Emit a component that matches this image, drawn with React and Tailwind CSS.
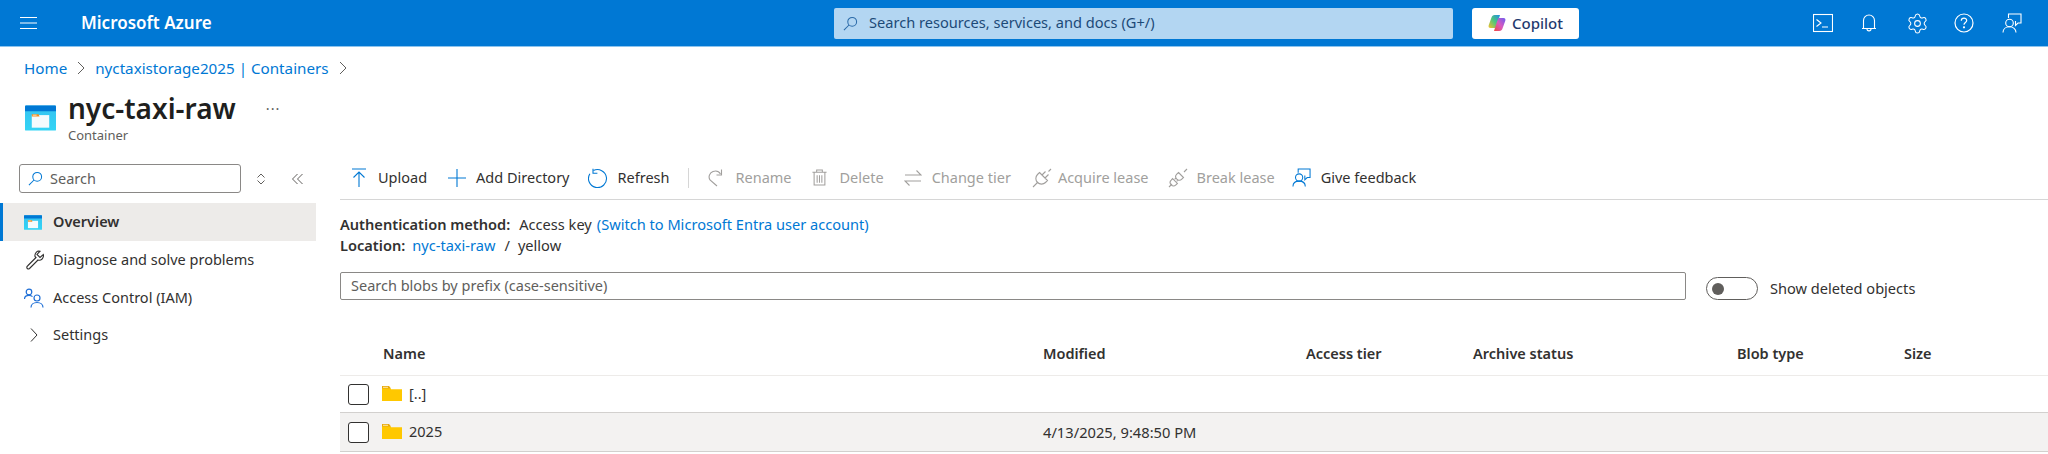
import React from 'react';
import { Settings as Gear } from 'lucide-react';

const Svg = ({ size = 20, className = '', children, vb = '0 0 20 20' }) => (
    <svg width={size} height={size} viewBox={vb} fill="none" stroke="currentColor" strokeWidth="1.1" className={`shrink-0 ${className}`}>
        {children}
    </svg>
);

const SearchIcon = ({ size = 16, className }) => (
    <Svg size={size} vb="0 0 16 16" className={className}>
        <circle cx="9.8" cy="6.2" r="4.7" />
        <path d="M6.4 9.6 1 15" />
    </Svg>
);

const ContainerIcon = ({ w, h }) => (
    <svg width={w} height={h} viewBox="0 0 32 26" className="shrink-0">
        <defs>
            <linearGradient id="cbody" x1="0" y1="0" x2="0" y2="1">
                <stop offset="0" stopColor="#37c2f0" />
                <stop offset="1" stopColor="#32d4f5" />
            </linearGradient>
        </defs>
        <rect x="0" y="0" width="32" height="26" rx="1" fill="url(#cbody)" />
        <path d="M1 0h30a1 1 0 0 1 1 1v5H0V1a1 1 0 0 1 1-1z" fill="#0078d4" />
        <rect x="7" y="10" width="18" height="13" fill="#f4fbfd" />
        <path d="M7 9h7l1 2.5H7z" fill="#f78d1e" />
        <rect x="8" y="9.6" width="4" height="1" fill="#fde0b8" />
    </svg>
);

const FolderIcon = () => (
    <svg width="20" height="16" viewBox="0 0 20 16" className="shrink-0">
        <path d="M0 1.2h7.5l1.6 2H20V15H0z" fill="#ffc800" />
        <path d="M0 0h7l2 2.4H0z" fill="#e8a90e" />
        <rect x="1" y="0.8" width="5" height="1" fill="#ffe9a8" />
    </svg>
);

const FeedbackIcon = ({ size = 20, className }) => (
    <Svg size={size} className={className}>
        <path d="M6.5 5V1h12.5v9h-3l-2.5 2.4V8" />
        <circle cx="7.5" cy="10" r="3.8" />
        <path d="M1 19.5c0-3.6 2.8-5.7 6.5-5.7s6.5 2.1 6.5 5.7" />
    </Svg>
);

const PlugIcon = ({ broken }) => (
    <Svg size={20} vb="0 0 20 20">
        {broken ? (
            <>
                <path d="M1 19l3-3M16 4l3-3" />
                <path d="M4.600 10.600l4.800 4.800-1.500 1.400a3.300 3.300 0 0 1-4.700-4.700z" />
                <path d="M10.500 4.500l5 5-1.700 1.700a3.500 3.500 0 0 1-5-5zM8.400 9.600l-1.800 1.800M10.400 11.600l-1.800 1.800" />
            </>
        ) : (
            <>
                <path d="M1 19l5-5M16.500 3.500L19 1" />
                <path d="M7.500 4.500l8 8-2 2a5.600 5.600 0 0 1-8-8zM10 7l3.500-3.500M13 10l3.500-3.500" />
            </>
        )}
    </Svg>
);

const toolbar = [
    {
        label: 'Upload', ml: 'ml-[12px]', gap: 'gap-[12px]', text: 'text-[#323130]', iconColor: 'text-[#0078d4]',
        icon: <Svg size={14} vb="0 0 14 20" className="h-5"><path d="M0 1h14M7 19V4M1.5 9.5 7 4l5.5 5.5" /></Svg>,
    },
    {
        label: 'Add Directory', ml: 'ml-[21px]', gap: 'gap-[10px]', text: 'text-[#323130]', iconColor: 'text-[#0078d4]',
        icon: <Svg size={18} vb="0 0 18 18"><path d="M9 0v18M0 9h18" /></Svg>,
    },
    {
        label: 'Refresh', ml: 'ml-[18px]', gap: 'gap-[10px]', text: 'text-[#323130]', iconColor: 'text-[#0078d4]',
        icon: <Svg size={20}><path d="M5.4 2.6a9 9 0 1 1-3.5 3.2" /><path d="M5 .8v4.4h4.4" /></Svg>,
    },
];

const disabledTools = [
    {
        label: 'Rename', ml: 'ml-[19px]', gap: 'gap-[10px]',
        icon: <Svg size={18} vb="0 0 18 18"><path d="M9 17 2 11c-2-3-.5-7 3-8.500 3-1 6 0 7.500 2.500" /><path d="M13.500.5V6H8.500" /></Svg>,
    },
    {
        label: 'Delete', ml: 'ml-[19px]', gap: 'gap-[12px]',
        icon: <Svg size={17} vb="0 0 17 18"><path d="M1 3.500h15M5.500 3.500V1h6v2.500M2.800 3.500V17h11.400V3.500M6 6.500v8M8.500 6.500v8M11 6.500v8" /></Svg>,
    },
    {
        label: 'Change tier', ml: 'ml-[20px]', gap: 'gap-[10px]',
        icon: <Svg size={18} vb="0 0 18 18"><path d="M1 6h16l-4.500-4.500M17 12H1l4.500 4.500" /></Svg>,
    },
    { label: 'Acquire lease', ml: 'ml-[21px]', gap: 'gap-[6px]', icon: <PlugIcon /> },
    { label: 'Break lease', ml: 'ml-[19px]', gap: 'gap-[9px]', icon: <PlugIcon broken /> },
];

const Tool = ({ item, color }) => (
    <div className={`flex items-center ${item.ml} ${item.gap} ${color}`}>
        <span className={item.iconColor}>{item.icon}</span>
        <span className="whitespace-nowrap">{item.label}</span>
    </div>
);

const NavRow = ({ icon, active, children }) => (
    <div className={`flex items-center h-[38px] w-[316px] ${active ? 'bg-[#edebe9] border-l-[3px] border-[#0078d4] font-semibold pl-[21px]' : 'pl-[24px]'}`}>
        <span className="w-[29px] shrink-0 flex">{icon}</span>
        <span className="whitespace-nowrap">{children}</span>
    </div>
);

const Checkbox = () => (
    <div className="w-[21px] h-[21px] rounded-[3px] border border-[#323130] bg-white ml-[8px]" />
);

const columns = ['Name', 'Modified', 'Access tier', 'Archive status', 'Blob type', 'Size'];
const tableGrid = 'grid grid-cols-[43px_660px_263px_167px_264px_167px_1fr] items-center';

export default function App() {
    return (
        <div className="w-[2048px] h-[454px] overflow-hidden bg-white text-[14.5px] text-[#323130] font-['Noto_Sans','Open_Sans',sans-serif] flex flex-col">
            {/* top bar */}
            <header className="h-[47px] shrink-0 bg-[#0078d4] border-b border-[#8cc4ee] flex items-center text-white">
                <div className="w-[81px] pl-[20px] shrink-0">
                    <svg width="17" height="12" viewBox="0 0 17 12" stroke="currentColor" strokeWidth="1"><path d="M0 .5h17M0 6h17M0 11.500h17" /></svg>
                </div>
                <div className="w-[753px] shrink-0 text-[17px] font-semibold">Microsoft Azure</div>
                <div className="w-[619px] h-[31px] shrink-0 bg-[#b3d6f2] rounded-[2px] flex items-center pl-[9px] gap-[11px] text-[#1c4a78]">
                    <SearchIcon size={15} className="text-[#2a6aa8]" />
                    <span className="text-[14.6px]">Search resources, services, and docs (G+/)</span>
                </div>
                <div className="ml-[19px] w-[107px] h-[31px] bg-white rounded-[3px] flex items-center justify-center gap-[6px] text-[#1f3a6e] font-medium text-[15px]">
                    <svg width="18" height="18" viewBox="0 0 18 18">
                        <defs>
                            <linearGradient id="cpa" x1="0" y1="1" x2="1" y2="0">
                                <stop offset="0" stopColor="#f7c12b" />
                                <stop offset=".5" stopColor="#4fc67a" />
                                <stop offset="1" stopColor="#1e8ce8" />
                            </linearGradient>
                            <linearGradient id="cpb" x1="0" y1="1" x2="1" y2="0">
                                <stop offset="0" stopColor="#f0483e" />
                                <stop offset=".5" stopColor="#d85ac0" />
                                <stop offset="1" stopColor="#6a5cf0" />
                            </linearGradient>
                        </defs>
                        <path d="M6.500 1H12L9.500 9l-2 5H2.500C.8 14 .2 12.800.7 11.300L3.500 3.500C4 2 5 1 6.500 1z" fill="url(#cpa)" />
                        <path d="M11.500 17H6l2.500-8 2-5h5c1.700 0 2.300 1.200 1.800 2.700l-2.800 7.800c-.5 1.500-1.500 2.500-3 2.500z" fill="url(#cpb)" />
                    </svg>
                    Copilot
                </div>
                <div className="ml-[234px] flex items-center text-white">
                    <Svg size={20} vb="0 0 20 20" className="mr-[26px]"><rect x=".5" y="1.500" width="19" height="17" /><path d="M3.500 6.500 8 10l-4.500 3.500M9 14h6" /></Svg>
                    <Svg size={20} className="mr-[27px]"><path d="M4.500 15V7.500a5.500 5.500 0 0 1 11 0V15M3 15.500h14M8 16c0 2.500 4 2.500 4 0" /></Svg>
                    <Gear size={23} strokeWidth={1.1} className="mr-[25px]" />
                    <svg width="20" height="20" viewBox="0 0 20 20" fill="none" stroke="currentColor" strokeWidth="1.200" className="mr-[28px]">
                        <circle cx="10" cy="10" r="9" />
                        <path d="M7.300 7.800c0-3.400 5.400-3.400 5.400-.3 0 2-2.700 2-2.700 4.300" />
                        <circle cx="10" cy="14.300" r=".5" fill="currentColor" />
                    </svg>
                    <FeedbackIcon size={20} />
                </div>
            </header>

            {/* breadcrumb */}
            <nav className="h-[42px] shrink-0 pl-[24px] flex items-center text-[#0078d4] text-[15.2px]">
                <span>Home</span>
                <svg width="8" height="14" viewBox="0 0 8 14" fill="none" stroke="#605e5c" className="mx-[10px]"><path d="M1 1l6 6-6 6" /></svg>
                <span>nyctaxistorage2025 | Containers</span>
                <svg width="8" height="14" viewBox="0 0 8 14" fill="none" stroke="#605e5c" className="mx-[10px]"><path d="M1 1l6 6-6 6" /></svg>
            </nav>

            {/* title */}
            <div className="h-[67px] shrink-0 flex items-start pl-[25px]">
                <div className="mt-[16px] mr-[12px]"><ContainerIcon w={31} h={26} /></div>
                <div className="flex flex-col">
                    <h1 className="text-[28px] leading-[38px] font-semibold text-[#201f1e] whitespace-nowrap">nyc-taxi-raw</h1>
                    <span className="text-[13px] leading-[18px] text-[#605e5c] -mt-[1px]">Container</span>
                </div>
                <span className="ml-[30px] mt-[9px] text-[#605e5c] tracking-[1px] leading-[20px]">···</span>
            </div>

            <div className="flex-1 flex min-h-0">
                {/* sidebar */}
                <aside className="w-[316px] shrink-0 mr-[24px]">
                    <div className="h-[47px] pt-[8px] flex items-start pl-[19px]">
                        <div className="w-[222px] h-[29px] border border-[#8a8886] rounded-[3px] flex items-center pl-[8px] gap-[7px] text-[#605e5c]">
                            <SearchIcon size={15} className="text-[#0078d4]" />
                            <span>Search</span>
                        </div>
                        <svg width="8" height="12" viewBox="0 0 8 12" fill="none" stroke="#605e5c" className="ml-[16px] mt-[9px]"><path d="M.5 4.500 4 1l3.500 3.500M.5 7.500 4 11l3.500-3.500" /></svg>
                        <svg width="11" height="12" viewBox="0 0 11 12" fill="none" stroke="#605e5c" className="ml-[27px] mt-[9px]"><path d="M5.500 1 .5 6l5 5M10.500 1l-5 5 5 5" /></svg>
                    </div>
                    <NavRow active icon={<ContainerIcon w={18} h={15} />}>Overview</NavRow>
                    <NavRow icon={<svg width="20" height="20" viewBox="0 0 20 20" fill="none" stroke="#323130" strokeWidth="1.100"><path d="M12 7.500 3.500 16a1.700 1.700 0 0 0 .5 3 2 2 0 0 0 1.500-.5L14 10c3 1 5.500-1.500 5.500-4.500l-.2-1-3.300 3-3-3 3-3.300C13 .5 10.500 3 11 6.500z" /></svg>}>Diagnose and solve problems</NavRow>
                    <NavRow icon={<svg width="20" height="20" viewBox="0 0 20 20" fill="none" stroke="#1f6fd6" strokeWidth="1.200"><circle cx="5" cy="4" r="2.800" /><path d="M.5 11c0-2.500 2-3.700 4.500-3.700 1.500 0 2.700.4 3.500 1.300" /><circle cx="13" cy="10" r="3" /><path d="M7 19.500c0-3 2.500-5 6-5s6 2 6 5" /></svg>}>Access Control (IAM)</NavRow>
                    <div className="flex items-center h-[36px] pl-[30px]">
                        <svg width="8" height="14" viewBox="0 0 8 14" fill="none" stroke="#323130" className="mr-[15px]"><path d="M1 .5l6 6.500-6 6.500" /></svg>
                        <span>Settings</span>
                    </div>
                </aside>

                {/* main */}
                <main className="flex-1 min-w-0">
                    <div className="h-[44px] border-b border-[#d6d6d6] flex items-center">
                        {toolbar.map((item) => <Tool key={item.label} item={item} color={item.text} />)}
                        <div className="ml-[18px] w-px h-[20px] bg-[#d6d6d6]" />
                        {disabledTools.map((item) => <Tool key={item.label} item={item} color="text-[#a19f9d]" />)}
                        <div className="ml-[17px] flex items-center gap-[10px]">
                            <FeedbackIcon size={19} className="text-[#0078d4]" />
                            <span>Give feedback</span>
                        </div>
                    </div>

                    <div className="pt-[14px] leading-[21px] text-[14.6px]">
                        <div className="flex gap-[9px]">
                            <span className="font-semibold">Authentication method:</span>
                            <span>Access key</span>
                            <span className="text-[#0078d4] -ml-[4px]">(Switch to Microsoft Entra user account)</span>
                        </div>
                        <div className="flex gap-[6px]">
                            <span className="font-semibold">Location:</span>
                            <span className="text-[#0078d4] ml-[1px]">nyc-taxi-raw</span>
                            <span className="ml-[3px] mr-[2px]">/</span>
                            <span>yellow</span>
                        </div>
                    </div>

                    <div className="mt-[16px] flex items-center">
                        <div className="w-[1346px] h-[28px] border border-[#8a8886] rounded-[2px] pl-[10px] flex items-center text-[#605e5c]">
                            Search blobs by prefix (case-sensitive)
                        </div>
                        <div className="ml-[20px] w-[52px] h-[23px] mt-[5px] rounded-full border border-[#605e5c] flex items-center pl-[5px]">
                            <div className="w-[12px] h-[12px] rounded-full bg-[#605e5c]" />
                        </div>
                        <span className="ml-[12px] mt-[5px] text-[14.6px]">Show deleted objects</span>
                    </div>

                    <div className={`${tableGrid} mt-[37px] h-[39px] pb-[4px] border-b border-[#edebe9] font-semibold`}>
                        <div />
                        {columns.map((c) => <div key={c}>{c}</div>)}
                    </div>
                    <div className={`${tableGrid} h-[37px] border-b border-[#d2d0ce]`}>
                        <Checkbox />
                        <div className="flex items-center gap-[7px] -ml-[1px]"><FolderIcon /><span>[..]</span></div>
                    </div>
                    <div className={`${tableGrid} h-[39px] bg-[#f3f2f1] border-b border-[#d2d0ce]`}>
                        <Checkbox />
                        <div className="flex items-center gap-[7px] -ml-[1px]"><FolderIcon /><span>2025</span></div>
                        <div className="text-[14.7px]">4/13/2025, 9:48:50 PM</div>
                    </div>
                </main>
            </div>
        </div>
    );
}
